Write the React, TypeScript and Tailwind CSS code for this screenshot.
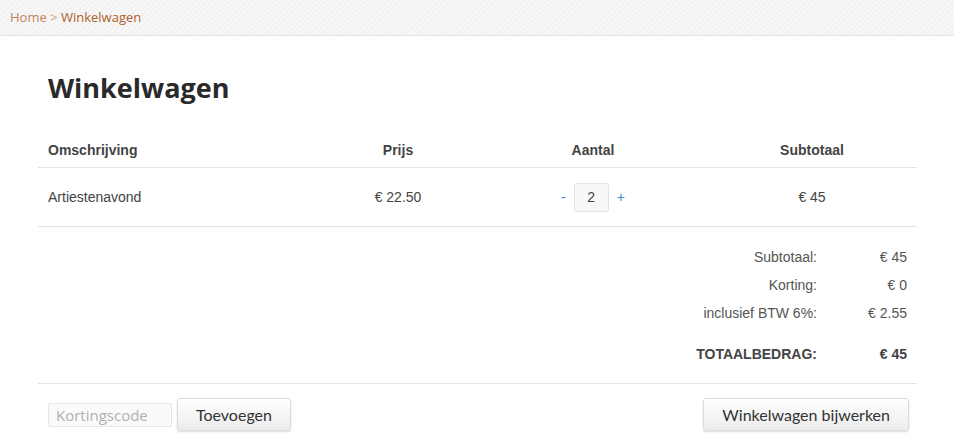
import React from "react";

type Row = { label: string; value: string; strong?: boolean };

const totals: Row[] = [
  { label: "Subtotaal:", value: "€ 45" },
  { label: "Korting:", value: "€ 0" },
  { label: "inclusief BTW 6%:", value: "€ 2.55" },
];

const cols = "grid grid-cols-[279px_162px_228px_1fr] items-center";

export default function App() {
  return (
    <div className="min-h-screen bg-white text-[#444] font-['Liberation_Sans',Arial,sans-serif]">
      {/* Breadcrumb */}
      <div className="h-[36px] border-b border-[#e4e4e4] bg-[#f4f4f4] bg-[repeating-linear-gradient(135deg,#f7f7f7_0px,#f7f7f7_2px,#efefef_3px,#f5f5f5_4px)] px-[10px] flex items-center">
        <p className="font-['Open_Sans',sans-serif] text-[13px] text-[#b87444]">
          <a href="#" className="text-[#c08559]">Home</a>
          <span className="text-[#c9a080]"> &gt; </span>
          <span className="text-[#b0602a]">Winkelwagen</span>
        </p>
      </div>

      <main className="px-[38px]">
        <h1 className="mt-[33px] pl-[10px] font-['Open_Sans',sans-serif] text-[27px] font-bold leading-[38px] text-[#2a2a2a]">
          Winkelwagen
        </h1>

        {/* Cart table */}
        <div className="mt-[27px] w-[879px]">
          <div className={`${cols} h-[34px] border-b border-[#e3e3e3] text-[14px] font-bold text-[#444]`}>
            <span className="pl-[10px]">Omschrijving</span>
            <span className="text-center">Prijs</span>
            <span className="text-center">Aantal</span>
            <span className="text-center">Subtotaal</span>
          </div>
          <div className={`${cols} h-[59px] border-b border-[#e3e3e3] text-[14px] text-[#444]`}>
            <span className="pl-[10px]">Artiestenavond</span>
            <span className="text-center">€ 22.50</span>
            <div className="flex items-center justify-center gap-[8px]">
              <button className="text-[14px] text-[#3d8bd8]">-</button>
              <span className="flex h-[29px] w-[35px] items-center justify-center rounded-[3px] border border-[#e3e3e3] bg-[#f8f8f8] text-[14px] text-[#444]">
                2
              </span>
              <button className="text-[14px] text-[#3d8bd8]">+</button>
            </div>
            <span className="text-center">€ 45</span>
          </div>

          {/* Totals */}
          <div className="border-b border-[#e3e3e3] pt-[16px] pb-[15px] text-[14px] text-[#555]">
            {totals.map((t) => (
              <div key={t.label} className="flex h-[28px] items-center justify-end pr-[10px]">
                <span className="text-right">{t.label}</span>
                <span className="w-[90px] text-right">{t.value}</span>
              </div>
            ))}
            <div className="mt-[13px] flex h-[28px] items-center justify-end pr-[10px] font-bold text-[#444]">
              <span>TOTAALBEDRAG:</span>
              <span className="w-[90px] text-right">€ 45</span>
            </div>
          </div>

          {/* Actions */}
          <div className="flex items-center justify-between pt-[14px] pl-[10px] pr-[8px]">
            <div className="flex items-center gap-[5px]">
              <input
                placeholder="Kortingscode"
                className="h-[24px] w-[124px] rounded-[2px] border border-[#e6e6e6] bg-[#fafafa] px-[7px] font-['Open_Sans',sans-serif] text-[15px] text-[#444] placeholder:text-[#b0b0b0] outline-none"
              />
              <button className="h-[33px] rounded-[3px] border border-[#dcdcdc] bg-gradient-to-b from-white to-[#ececec] px-[18px] font-['Lato',sans-serif] text-[16px] text-[#333] shadow-[0_1px_2px_rgba(0,0,0,0.15)]">
                Toevoegen
              </button>
            </div>
            <button className="h-[33px] rounded-[3px] border border-[#dcdcdc] bg-gradient-to-b from-white to-[#ececec] px-[18px] font-['Lato',sans-serif] text-[16px] text-[#333] shadow-[0_1px_2px_rgba(0,0,0,0.15)]">
              Winkelwagen bijwerken
            </button>
          </div>
        </div>
      </main>
    </div>
  );
}
